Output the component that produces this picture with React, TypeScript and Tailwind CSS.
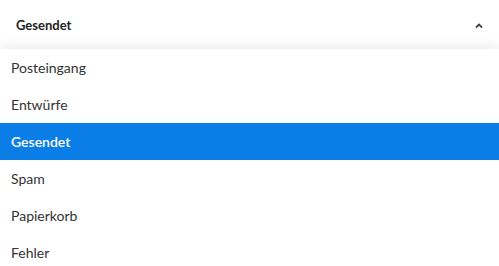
import React from 'react';

const folders = ['Posteingang', 'Entwürfe', 'Gesendet', 'Spam', 'Papierkorb', 'Fehler'];

const App = () => {
  const selected = 'Gesendet';

  return (
    <div className="w-[499px] h-[266px] overflow-hidden bg-white font-['Lato',sans-serif]">
      {/* Header */}
      <div className="h-[49px] flex items-center justify-between pl-4 pr-[15px] pt-[2px] text-[13px] font-bold text-[#222]">
        <span>Gesendet</span>
        <svg width="10" height="10" viewBox="0 0 10 10" className="text-[#444]">
          <path d="M2 6.5 L5 3.5 L8 6.5" fill="none" stroke="currentColor" strokeWidth="1.8" />
        </svg>
      </div>

      {/* Dropdown */}
      <div className="relative bg-white shadow-[0_-2px_12px_rgba(0,0,0,0.09)]">
        {folders.map((f) => (
          <div
            key={f}
            className={`h-[37px] flex items-center px-[11px] text-[14px] ${
              f === selected ? 'bg-[#0a7de6] text-white font-semibold' : 'text-[#333]'
            }`}
          >
            {f}
          </div>
        ))}
      </div>
    </div>
  );
};

export default App;
